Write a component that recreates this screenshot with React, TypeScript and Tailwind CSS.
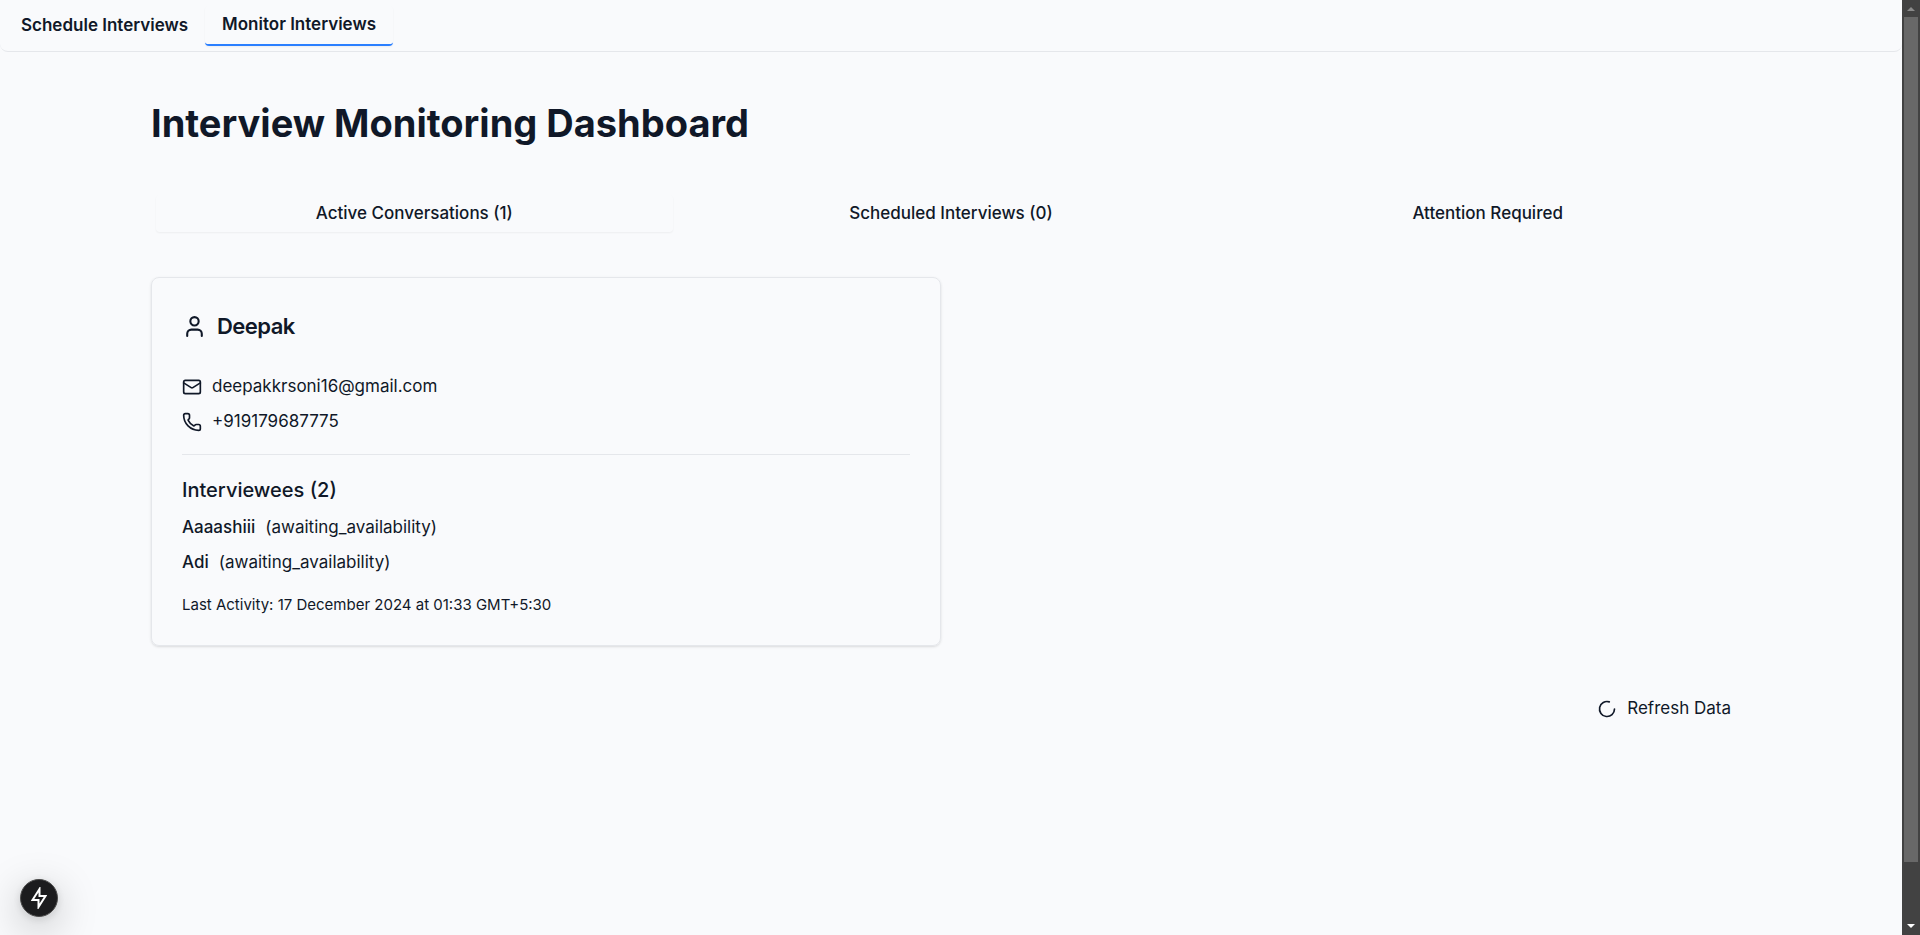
import { useState } from 'react'
import { LoaderCircle, Mail, Phone, User } from 'lucide-react'
import clsx from 'clsx'

const NAV = ['Schedule Interviews', 'Monitor Interviews']

const TABS = ['Active Conversations (1)', 'Scheduled Interviews (0)', 'Attention Required']

const CONVERSATION = {
  name: 'Deepak',
  email: 'deepakkrsoni16@gmail.com',
  phone: '+919179687775',
  lastActivity: '17 December 2024 at 01:33 GMT+5:30',
  interviewees: [
    { name: 'Aaaashiii', status: 'awaiting_availability' },
    { name: 'Adi', status: 'awaiting_availability' },
  ],
}

const TopNav = () => {
  const [active, setActive] = useState(NAV[1])

  return (
    <nav className="flex h-[52px] items-center rounded-lg border-b border-gray-200 px-1">
      {NAV.map(item => (
        <button
          key={item}
          type="button"
          onClick={() => setActive(item)}
          className={clsx(
            'h-10 rounded-sm px-[17px] pb-0.5 text-[17px] leading-6 font-semibold',
            active === item && 'border-b-2 border-blue-500 shadow-xs'
          )}
        >
          {item}
        </button>
      ))}
    </nav>
  )
}

const ConversationCard = ({ data }: { data: typeof CONVERSATION }) => (
  <article className="rounded-lg border border-gray-200 p-[30px] shadow-sm">
    <h2 className="flex items-center gap-2.5 text-[22px] leading-9 font-semibold tracking-tight">
      <User className="size-[25px]" />
      {data.name}
    </h2>

    <div className="mt-[30px] space-y-2.5 text-[17px] leading-[25px]">
      <p className="flex items-center gap-2.5">
        <Mail className="size-5" />
        {data.email}
      </p>
      <p className="flex items-center gap-2.5">
        <Phone className="size-5" />
        {data.phone}
      </p>
    </div>

    <div className="mt-5 border-t border-gray-200 pt-5">
      <h3 className="text-xl leading-[30px] font-medium">Interviewees ({data.interviewees.length})</h3>
      <ul className="mt-2.5 space-y-2.5 text-[17px] leading-[25px]">
        {data.interviewees.map(p => (
          <li key={p.name} className="flex gap-2.5">
            <span className="font-medium">{p.name}</span>
            <span>({p.status})</span>
          </li>
        ))}
      </ul>
    </div>

    <p className="mt-5 text-[15px] leading-5">Last Activity: {data.lastActivity}</p>
  </article>
)

const Dashboard = () => {
  const [tab, setTab] = useState(TABS[0])

  return (
    <main className="mx-auto w-full max-w-[1600px] py-12">
      <h1 className="text-[38px] leading-[46px] font-bold">Interview Monitoring Dashboard</h1>

      <div role="tablist" className="mt-11 grid grid-cols-3 gap-5 p-[5px]">
        {TABS.map(t => (
          <button
            key={t}
            type="button"
            role="tab"
            aria-selected={tab === t}
            onClick={() => setTab(t)}
            className={clsx('rounded-sm py-1.5 text-[17px] leading-[25px] font-medium', tab === t && 'shadow-xs')}
          >
            {t}
          </button>
        ))}
      </div>

      <div className="mt-10 grid grid-cols-2 gap-5">
        <ConversationCard data={CONVERSATION} />
      </div>

      <div className="mt-10 flex justify-end">
        <button type="button" className="flex h-[45px] items-center gap-2.5 px-5 text-[17px] leading-[25px]">
          <LoaderCircle className="size-5" />
          Refresh Data
        </button>
      </div>
    </main>
  )
}

// Dark page scrollbar
const ScrollTrack = () => (
  <div aria-hidden="true" className="flex w-[18px] shrink-0 flex-col items-center bg-[#424242]">
    <svg viewBox="0 0 18 17" className="h-[17px] w-[18px]">
      <path d="M9 7l4 4H5z" fill="#8a8a8a" />
    </svg>
    <div className="w-3.5 grow bg-[#686868]" />
    <div className="h-14" />
    <svg viewBox="0 0 18 17" className="h-[17px] w-[18px]">
      <path d="M5 6h8l-4 4z" fill="#fff" />
    </svg>
  </div>
)

export default function App() {
  return (
    <div className="flex h-screen overflow-hidden bg-[#f9fafc] font-[Inter,sans-serif] text-gray-900">
      <div className="min-w-0 flex-1">
        <TopNav />
        <Dashboard />
      </div>
      <ScrollTrack />

      <button
        type="button"
        aria-label="Static route"
        className="fixed bottom-[18px] left-5 flex size-[38px] items-center justify-center rounded-full border border-[#4a4a4a] bg-[#1c1c1e] text-white shadow-[0_11px_40px_0_rgba(0,0,0,0.25),0_2px_10px_0_rgba(0,0,0,0.12)]"
      >
        <svg viewBox="0 0 16 22" fill="none" className="h-[22px] w-4" stroke="currentColor" strokeWidth="2">
          <path d="M8.5 2 1.5 13H7.5V20L14.5 9H8.5z" />
        </svg>
      </button>
    </div>
  )
}
